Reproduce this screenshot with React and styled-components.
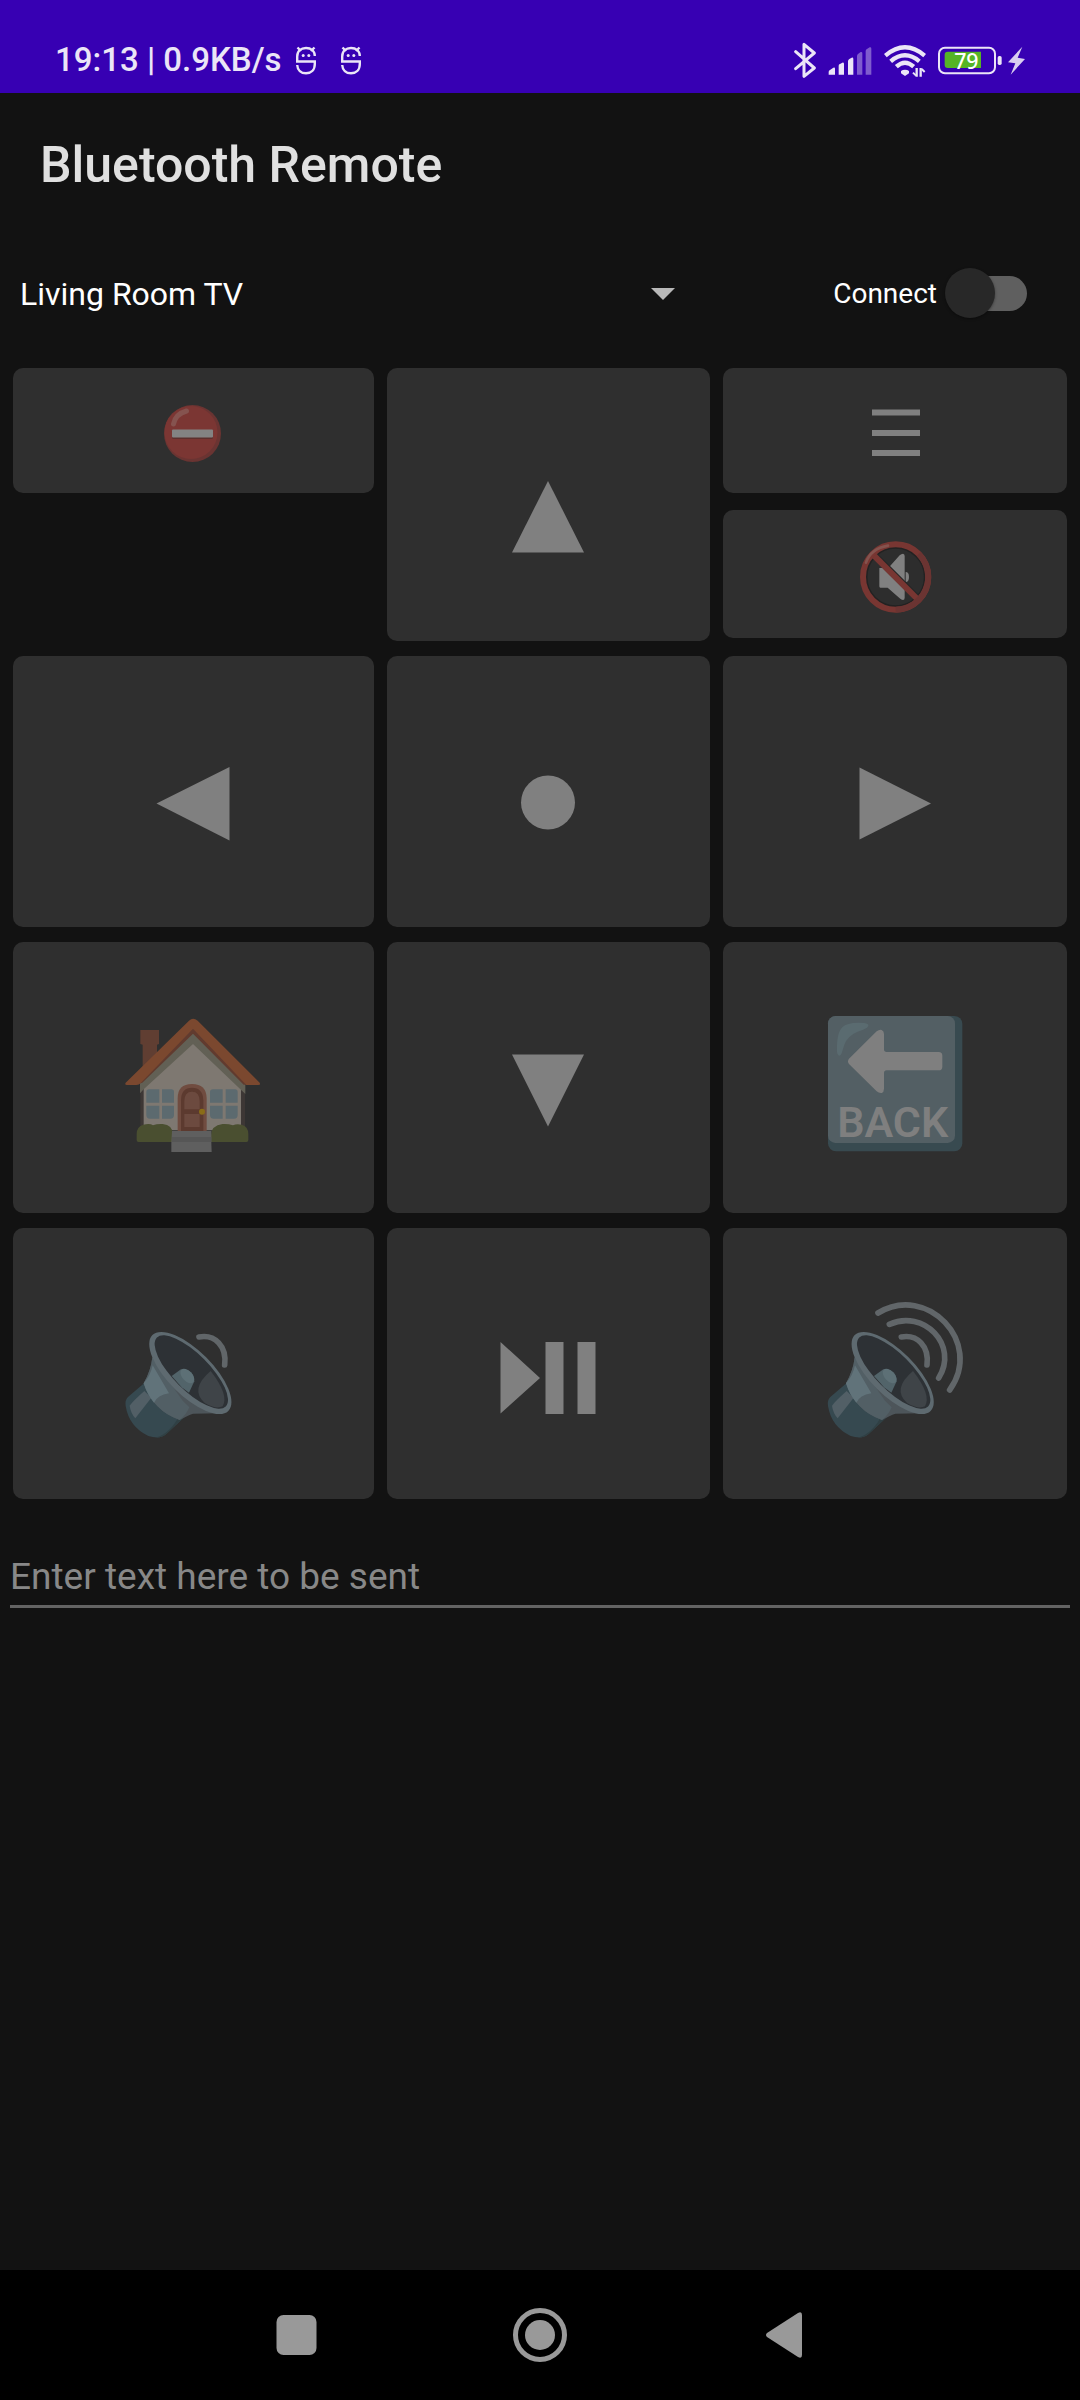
import React from "react";
import styled, { createGlobalStyle } from "styled-components";

const GlobalStyle = createGlobalStyle`
  *, *::before, *::after { box-sizing: border-box; }
  body { margin: 0; background: #121212; }
  button, input, select { font-family: inherit; }
`;

const Screen = styled.div`
  display: flex;
  flex-direction: column;
  min-height: 100vh;
  background: #121212;
  color: #ffffff;
  font-family: Roboto, "Noto Sans", sans-serif;
`;

const StatusBar = styled.header`
  display: flex;
  align-items: center;
  justify-content: space-between;
  height: 93px;
  padding: 27px 55px 0;
  background: #3700b3;
  color: #ebe5f7;
`;

const StatusGroup = styled.div`
  display: flex;
  align-items: center;
  gap: ${(p) => p.$gap}px;
`;

const StatusText = styled.span`
  font-size: 33px;
  font-weight: 500;
  line-height: 40px;
  white-space: nowrap;
`;

const StatusIcon = styled.svg`
  display: block;
  flex: none;
  width: ${(p) => p.$w}px;
  height: 36px;
`;

const TitleBar = styled.div`
  display: flex;
  align-items: center;
  height: 143px;
  padding: 0 40px;
`;

const Title = styled.h1`
  margin: 0;
  color: #e0e0e0;
  font-size: 50px;
  font-weight: 500;
  line-height: 60px;
`;

const Main = styled.main`
  flex: 1;
`;

const Controls = styled.div`
  display: grid;
  grid-template-columns: 711fr 369fr;
  align-items: center;
  height: 113px;
`;

const DevicePicker = styled.div`
  position: relative;
`;

const DeviceSelect = styled.select`
  display: block;
  width: 100%;
  height: 80px;
  padding: 2px 72px 0 20px;
  border: 0;
  background: transparent;
  color: #ffffff;
  font-size: 32px;
  appearance: none;
`;

const Caret = styled.svg`
  position: absolute;
  top: 35px;
  right: 36px;
  width: 24px;
  height: 12px;
  pointer-events: none;
`;

const ConnectLabel = styled.label`
  display: flex;
  align-items: center;
  justify-content: flex-end;
  gap: 8px;
  padding-right: 53px;
  font-size: 28px;
  line-height: 36px;
`;

const ConnectText = styled.span`
  padding-top: 2px;
`;

const Switch = styled.input`
  position: relative;
  width: 82px;
  height: 50px;
  margin: 0;
  appearance: none;

  &::before {
    content: "";
    position: absolute;
    inset: 8px 0 7px 10px;
    border-radius: 18px;
    background: #5f5f5f;
  }

  &::after {
    content: "";
    position: absolute;
    top: 0;
    left: 0;
    width: 50px;
    height: 50px;
    border-radius: 50%;
    background: #282828;
    box-shadow: 0 1px 3px rgba(0, 0, 0, 0.4);
  }
`;

const Keypad = styled.div`
  display: grid;
  grid-template-columns: 361fr 323fr 344fr;
  grid-template-rows: 273px repeat(3, 271px);
  gap: 15px 13px;
  padding: 19px 13px 0;
`;

const KeyStack = styled.div`
  display: flex;
  flex-direction: column;
  gap: 17px;
`;

const Key = styled.button`
  display: flex;
  align-items: center;
  justify-content: center;
  width: 100%;
  height: ${(p) => (p.$height ? `${p.$height}px` : "100%")};
  padding: 0;
  border: 0;
  border-radius: 10px;
  background: #2f2f2f;
  color: #808080;
`;

const Glyph = styled.svg`
  display: block;
  flex: none;
  width: ${(p) => p.$size || 160}px;
  height: ${(p) => p.$size || 160}px;
`;

const SendField = styled.input`
  display: block;
  width: calc(100% - 20px);
  height: 61px;
  margin: 48px 10px 0;
  padding: 0;
  border: 0;
  border-bottom: 3px solid #636363;
  border-radius: 0;
  outline: 0;
  background: transparent;
  color: #ffffff;
  font-size: 37px;

  &::placeholder {
    color: #888888;
    opacity: 1;
  }
`;

const NavBar = styled.nav`
  display: flex;
  align-items: center;
  justify-content: center;
  gap: 148px;
  height: 130px;
  background: #000000;
`;

const NavButton = styled.button`
  display: flex;
  align-items: center;
  justify-content: center;
  width: 96px;
  height: 96px;
  padding: 0;
  border: 0;
  background: transparent;
  color: #999999;
`;

const NavIcon = styled.svg`
  display: block;
  width: 56px;
  height: 56px;
`;

function BugIcon() {
  return (
    <StatusIcon $w={20} viewBox="0 0 20 36" fill="none" stroke="currentColor" strokeWidth="2.400" aria-hidden="true">
      <path d="M1.200 19v-4.500C1.200 9 5 6 10 6s8.800 3 8.800 8M0 19.500h18.800V22c0 6-3.800 9.300-8.800 9.300S1.500 28 1.200 23" />
      <path d="M1.500 5.500l3.500 3.500M18.500 5.500L15 9" />
      <circle cx="7.200" cy="13.500" r="1.500" fill="currentColor" stroke="none" />
      <circle cx="12.800" cy="13.500" r="1.500" fill="currentColor" stroke="none" />
    </StatusIcon>
  );
}

function BluetoothIcon() {
  return (
    <StatusIcon $w={22} viewBox="102 66 66 108" fill="none" stroke="currentColor" strokeWidth="9" strokeLinejoin="round" strokeLinecap="round" aria-hidden="true">
      <path d="M107 95l56 49-31 25V73l31 26-56 47" />
    </StatusIcon>
  );
}

function SignalIcon() {
  return (
    <StatusIcon $w={44} viewBox="204 66 132 108" fill="currentColor" aria-hidden="true">
      <path d="M206 164v-8q0-4 4-6l10-7q5-2 5 3v18zM236 164v-27q0-4 4-5l7-4q5-1 5 4v32zM264 164v-40q0-5 4-7l7-4q5-1 5 4v47z" />
      <path opacity="0.400" d="M291 164v-56q0-5 4-7l7-5q5-1 5 4v64zM317 164V93q0-4 4-6l8-5q5-1 5 4v78z" />
    </StatusIcon>
  );
}

function WifiIcon() {
  return (
    <StatusIcon $w={42} viewBox="369 66 126 108" fill="none" stroke="currentColor" aria-hidden="true">
      <path strokeWidth="13" d="M373 107q59-50 118 0M389 124q43-36 86 0M406 140q26-24 52 0" />
      <path fill="currentColor" stroke="none" d="M432 149q7 0 12 4v7l-12 8-12-8v-7q5-4 12-4z" />
      <path strokeWidth="7" d="M467 144v26M479 144v26" />
      <path strokeWidth="6" d="M456 158l9 9M491 156l-9-9" />
    </StatusIcon>
  );
}

function BatteryIcon() {
  return (
    <StatusIcon $w={64} viewBox="534 66 192 108" fill="none" role="img" aria-label="Battery 79 percent">
      <rect x="537" y="83" width="168" height="77" rx="18" stroke="currentColor" strokeWidth="6" />
      <path fill="#55b425" d="M563 95h100v49H563q-9 0-9-9v-31q0-9 9-9z" />
      <rect x="713" y="108" width="12" height="27" rx="5" fill="currentColor" />
      <text x="619" y="147" textAnchor="middle" fill="#ffffff" fontFamily='"Noto Sans", sans-serif' fontWeight="500" fontSize="64">
        79
      </text>
    </StatusIcon>
  );
}

function BoltIcon() {
  return (
    <StatusIcon $w={17} viewBox="744 66 51 108" fill="currentColor" opacity="0.900" aria-hidden="true">
      <path d="M787 80l-43 47 22 3-14 34 43-47-22-4z" />
    </StatusIcon>
  );
}

function ShapeGlyph({ d, size = 160, shift = 0 }) {
  return (
    <Glyph $size={size} viewBox={`${shift - size / 2} ${-size / 2} ${size} ${size}`} fill="currentColor" aria-hidden="true">
      <path d={d} />
    </Glyph>
  );
}

function PowerGlyph() {
  return (
    <Glyph $size={120} viewBox="-59 -60 120 120" aria-hidden="true">
      <circle cx="-0.500" cy="2.500" r="28.500" fill="#6a3432" />
      <circle cx="-2" cy="1.500" r="26.500" fill="#7b3633" />
      <path d="M-19.500-7q2-10 13-13" fill="none" stroke="#85534f" strokeWidth="5" strokeLinecap="round" />
      <rect x="-21" y="-1" width="41" height="9" rx="1.500" fill="#5c302e" />
      <rect x="-21" y="-1.500" width="41" height="8" rx="1" fill="#838383" />
    </Glyph>
  );
}

function MuteGlyph() {
  return (
    <Glyph $size={120} viewBox="405 492 360 360" fill="none" aria-hidden="true">
      <circle cx="587" cy="681" r="88" fill="#2d2d2d" stroke="#222222" strokeWidth="7" />
      <path fill="#808080" d="M538 654h27l34-38q5-5 10-5 5 1 5 7v125q0 7-5 7-5 0-10-5l-36-32h-22q-3 0-3-4z" />
      <path fill="#808080" d="M617 666q10 0 10 15t-10 15z" />
      <path d="M524 616l130 130" stroke="#262626" strokeWidth="20" />
      <path d="M522 617l130 130" stroke="#783632" strokeWidth="18" />
      <circle cx="587" cy="681" r="98" stroke="#783632" strokeWidth="18" />
      <path d="M656 612a98 98 0 0 1-69 167" stroke="#6b3432" strokeWidth="18" />
      <path d="M498 638q14-42 66-51" stroke="#84534e" strokeWidth="8" strokeLinecap="round" />
    </Glyph>
  );
}

function HomeGlyph() {
  return (
    <Glyph viewBox="73 54 480 480" aria-hidden="true">
      <path fill="#603e32" d="M152 150h56v42l-6 2v40l-43 30v-70l-7-2z" />
      <path fill="#3d3735" d="M152 300h314v140H152z" />
      <path fill="#7e7871" d="M162 316L310 172l144 144v135H162z" />
      <path fill="#626055" d="M151 340v-30L310 155l157 155v32L310 192 162 328z" />
      <path fill="#613b2f" d="M134 314l176-172 180 172h-28L310 161 158 308z" />
      <path fill="#7b482f" d="M108 308L298 122q12-12 26 0l186 186q4 7-4 7h-36L310 146 154 308q-6 7-14 7h-28q-8 0-4-7z" />
      <g fill="#5c6a6f">
        <path d="M178 328h31v40h-39v-32q0-8 8-8zM217 328h28q8 0 8 8v32h-36zM170 377h39v39h-28q-11 0-11-11zM217 377h36v28q0 11-11 11h-25z" />
        <path d="M370 328h29v40h-38v-32q0-8 9-8zM408 328h28q8 0 8 8v32h-36zM361 377h38v39h-27q-11 0-11-11zM408 377h36v28q0 11-11 11h-25z" />
      </g>
      <path fill="#704c40" d="M264 453v-98q0-43 43-43t44 43v98z" />
      <path fill="#5c3a2f" d="M274 453v-92q0-38 33-38t34 38v92z" />
      <path fill="#6c4a3f" d="M284 388v-24q0-29 23-29t23 29v24zM284 402h46v39h-46z" />
      <circle cx="337" cy="395" r="9" fill="#8a6c17" />
      <path fill="#4a4f30" d="M141 480v-18q0-22 20-28 20-5 29 2 12-5 29-4 30 3 30 30v24H147q-6 0-6-6zM476 480v-18q0-22-20-28-15-4-26 2-14-5-31-4-35 5-35 34v20h106q6 0 6-6z" />
      <path fill="#5f5f5f" d="M247 453h118v35l1 28H245v-28z" />
      <path fill="#565656" d="M247 471h118v15H247z" />
    </Glyph>
  );
}

function BackGlyph() {
  return (
    <Glyph viewBox="75 54 480 480" aria-hidden="true">
      <rect x="114" y="108" width="403" height="406" rx="24" fill="#384a50" />
      <rect x="114" y="108" width="381" height="381" rx="22" fill="#535f64" />
      <path fill="#5a6b70" d="M141 216q-2-56 16-74 16-17 66-13 20 4 8 14-10 6-30 13-28 12-38 38l-8 26q-3 8-8 7-5-2-6-11z" />
      <path fill="#7f7f7f" d="M177 236l83-82q8-6 15-4 7 3 7 12v46q0 8 8 8h156q11 0 11 11v33q0 11-11 11H290q-8 0-8 8v47q0 10-7 13-8 1-15-5l-83-82q-6-8 0-16z" />
      <text x="308" y="471" textAnchor="middle" fill="#7f7f7f" fontFamily="Roboto, sans-serif" fontWeight="600" fontSize="129">
        BACK
      </text>
    </Glyph>
  );
}

function SpeakerGlyph({ viewBox, children }) {
  return (
    <Glyph viewBox={viewBox} fill="none" aria-hidden="true">
      <path fill="#364950" d="M165 308l-50 43q-10 10-7 27 10 62 68 90 14 5 34 4 12-2 20-10l58-54z" />
      <path fill="#304044" d="M210 472q12-2 20-10l58-54-24 8q-30 50-70 57z" />
      <path fill="#525f66" d="M164 333l21 20-48 62q-14-16-17-38 10-14 44-44z" />
      <path fill="#4d555a" d="M188 232q-4 40-26 78 30 84 108 110 24-14 40-19l76-1z" />
      <path fill="#525f65" d="M188 232q-4 40-26 78 30 84 108 110 20-16 29-38l-20-20z" />
      <path fill="#61737a" d="M189 256q-6 30-27 54 10 34 31 58 10-22 45-28z" />
      <ellipse cx="302" cy="279" rx="161" ry="67" transform="rotate(45 302 279)" fill="#5e6a70" />
      <ellipse cx="305" cy="276" rx="146" ry="54" transform="rotate(45 305 276)" fill="#2d3135" />
      <path fill="#3f4448" d="M363 273q-64 54-18 96 34 20 54 10 20-34-36-106z" />
      <path fill="#52646a" d="M246 288l28-20q40 0 40 36l-16 34-22-16z" />
      <ellipse cx="293" cy="288" rx="26" ry="15" transform="rotate(47 293 288)" fill="#5d7076" />
      {children}
    </Glyph>
  );
}

const waveProps = { stroke: "#616669", strokeWidth: 17, strokeLinecap: "round" };

function VolumeDownGlyph() {
  return (
    <SpeakerGlyph viewBox="73 12 480 480">
      <path {...waveProps} d="M328 171c48-9 84 28 77 84" />
    </SpeakerGlyph>
  );
}

function VolumeUpGlyph() {
  return (
    <SpeakerGlyph viewBox="69 12 480 480">
      <path {...waveProps} d="M328 171c48-9 84 28 77 84M292 133c102-47 210 62 148 161M258 99c146-90 318 88 215 231" />
    </SpeakerGlyph>
  );
}

export default function App() {
  return (
    <Screen>
      <GlobalStyle />
      <StatusBar>
        <StatusGroup $gap={14}>
          <StatusText>19:13 | 0.9KB/s</StatusText>
          <StatusGroup $gap={25}>
            <BugIcon />
            <BugIcon />
          </StatusGroup>
        </StatusGroup>
        <StatusGroup $gap={12}>
          <BluetoothIcon />
          <SignalIcon />
          <WifiIcon />
          <StatusGroup $gap={6}>
            <BatteryIcon />
            <BoltIcon />
          </StatusGroup>
        </StatusGroup>
      </StatusBar>

      <TitleBar>
        <Title>Bluetooth Remote</Title>
      </TitleBar>

      <Main>
        <Controls>
          <DevicePicker>
            <DeviceSelect aria-label="Device" defaultValue="living-room">
              <option value="living-room">Living Room TV</option>
            </DeviceSelect>
            <Caret viewBox="0 0 24 12" aria-hidden="true">
              <path fill="#b8b8b8" d="M0 0h24L12 12z" />
            </Caret>
          </DevicePicker>
          <ConnectLabel>
            <ConnectText>Connect</ConnectText>
            <Switch type="checkbox" role="switch" />
          </ConnectLabel>
        </Controls>

        <Keypad>
          <KeyStack>
            <Key $height={125} disabled aria-label="Power">
              <PowerGlyph />
            </Key>
          </KeyStack>
          <Key disabled aria-label="Up">
            <ShapeGlyph shift={1} d="M0-24l36 71.500h-72z" />
          </Key>
          <KeyStack>
            <Key $height={125} disabled aria-label="Menu">
              <ShapeGlyph size={120} d="M-23-21.500h48v6h-48zM-23-1h48v6h-48zM-23 19h48v6h-48z" />
            </Key>
            <Key $height={128} disabled aria-label="Mute">
              <MuteGlyph />
            </Key>
          </KeyStack>

          <Key disabled aria-label="Left">
            <ShapeGlyph shift={1} d="M-36.500 11.500L36.500-25v73.500z" />
          </Key>
          <Key disabled aria-label="Select">
            <ShapeGlyph shift={1} d="M-27 10.500a27 27 0 1 0 54 0a27 27 0 1 0-54 0z" />
          </Key>
          <Key disabled aria-label="Right">
            <ShapeGlyph d="M36 11.500l-71.500-36v72z" />
          </Key>

          <Key disabled aria-label="Home">
            <HomeGlyph />
          </Key>
          <Key disabled aria-label="Down">
            <ShapeGlyph shift={1} d="M0 48.500l-36-72h72z" />
          </Key>
          <Key disabled aria-label="Back">
            <BackGlyph />
          </Key>

          <Key disabled aria-label="Volume down">
            <VolumeDownGlyph />
          </Key>
          <Key disabled aria-label="Play or pause">
            <ShapeGlyph shift={1} d="M-47.500-22L-8 14l-39.500 35.500zM-2.500-22h18v72h-18zM29.500-22h18v72h-18z" />
          </Key>
          <Key disabled aria-label="Volume up">
            <VolumeUpGlyph />
          </Key>
        </Keypad>

        <SendField type="text" aria-label="Text to send" placeholder="Enter text here to be sent" />
      </Main>

      <NavBar>
        <NavButton aria-label="Recent apps">
          <NavIcon viewBox="-28 -28 56 56" fill="currentColor" aria-hidden="true">
            <rect x="-19.500" y="-20" width="40" height="40" rx="7" />
          </NavIcon>
        </NavButton>
        <NavButton aria-label="Home screen">
          <NavIcon viewBox="-28 -28 56 56" fill="currentColor" aria-hidden="true">
            <circle r="24.500" fill="none" stroke="currentColor" strokeWidth="5" />
            <circle r="15" />
          </NavIcon>
        </NavButton>
        <NavButton aria-label="Go back">
          <NavIcon viewBox="-28 -28 56 56" fill="currentColor" aria-hidden="true">
            <path d="M-17-2L14-22q4-2 4 2v40q0 4-4 2L-17 2q-2-2 0-4z" />
          </NavIcon>
        </NavButton>
      </NavBar>
    </Screen>
  );
}
